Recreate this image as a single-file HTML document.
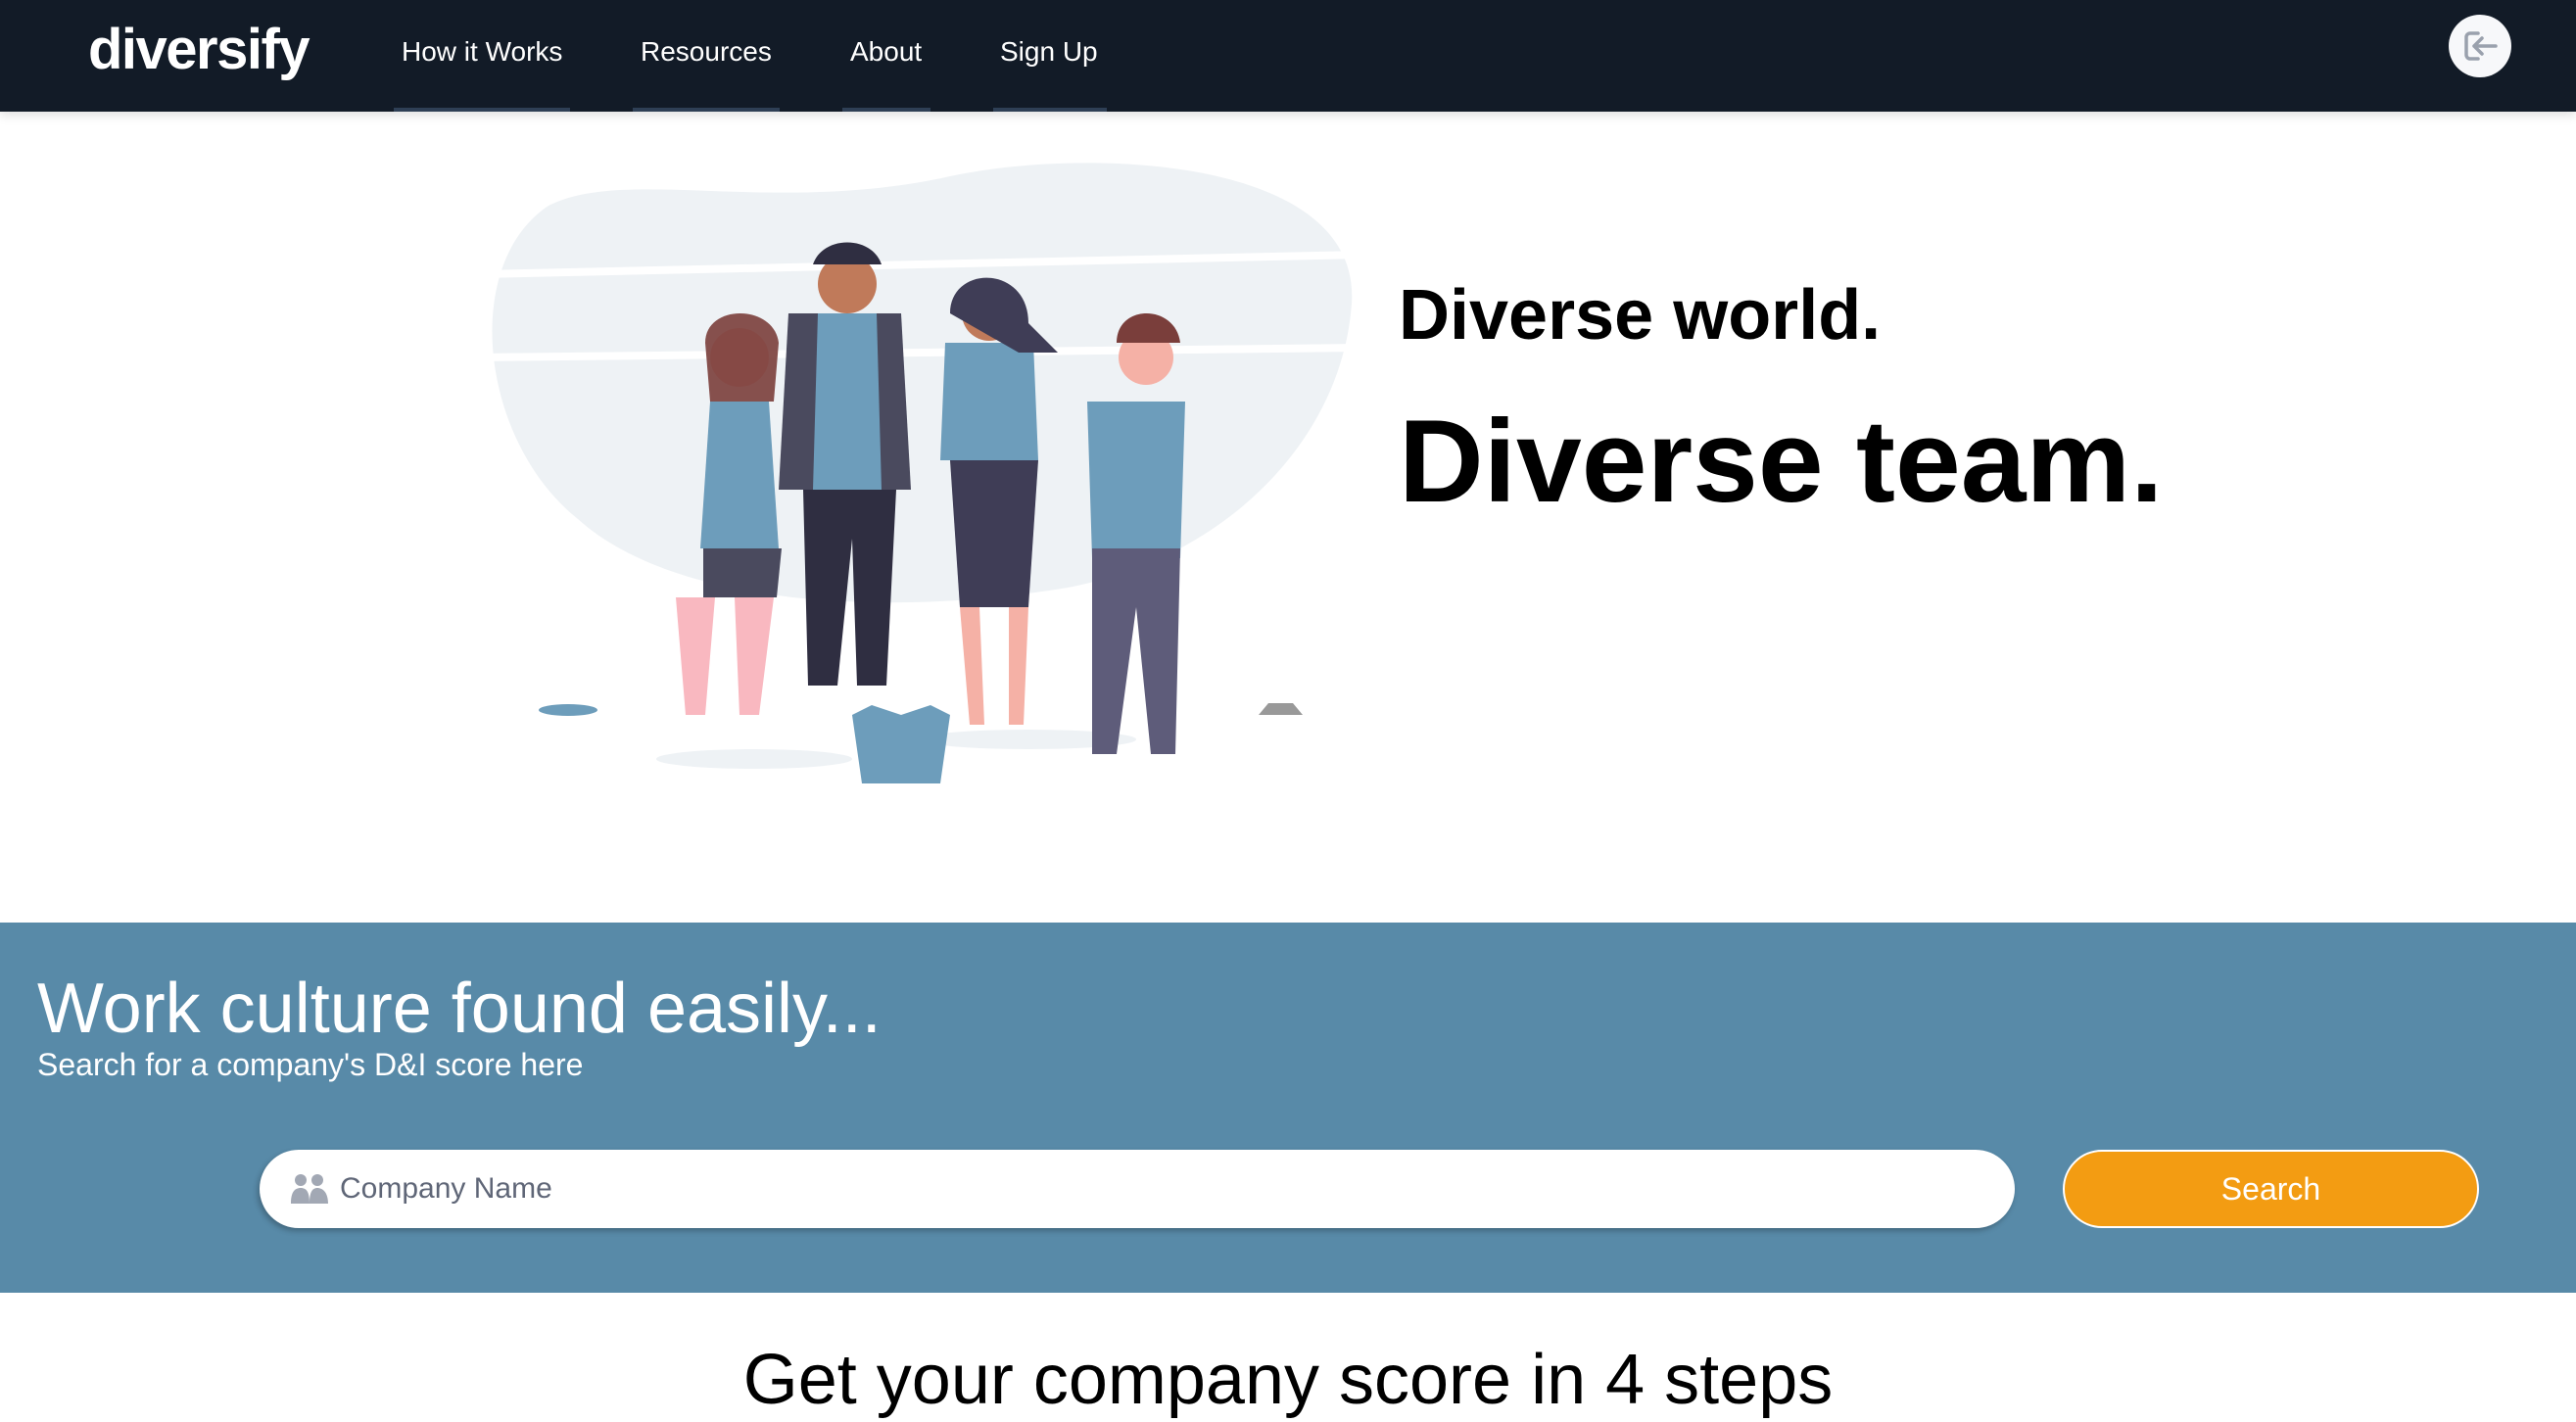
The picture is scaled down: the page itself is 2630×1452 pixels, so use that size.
<!DOCTYPE html>
<html><head><meta charset="utf-8"><style>
*{margin:0;padding:0;box-sizing:border-box}
body{width:2630px;height:1452px;overflow:hidden;background:#fff;font-family:"Liberation Sans",Arial,sans-serif;position:relative}
.nav{position:absolute;left:0;top:0;width:2630px;height:114px;background:#121b27;box-shadow:0 4px 10px rgba(0,0,0,.12)}
.logo{position:absolute;left:90px;top:17px;font-size:58px;font-weight:bold;color:#fff;letter-spacing:-1.5px}
.nl{position:absolute;top:37px;font-size:28px;color:#fff}
.tab{position:absolute;top:110px;height:4px;background:#2e3f55}
.ic{position:absolute;left:2500px;top:15px;width:64px;height:64px;border-radius:50%;background:#f7f8fa}
.h1{position:absolute;left:1428px;top:281px;font-size:72px;font-weight:bold;color:#000}
.h2{position:absolute;left:1428px;top:402px;font-size:120px;font-weight:bold;color:#000}
.band{position:absolute;left:0;top:942px;width:2630px;height:378px;background:#588aa8}
.t1{position:absolute;left:38px;font-size:72px;color:#fff}
.t2{position:absolute;left:38px;font-size:32px;color:#fff}
.inp{position:absolute;left:265px;top:1174px;width:1792px;height:80px;border-radius:40px;background:#fff;box-shadow:-2px 3px 6px rgba(0,0,0,.25)}
.inp span{position:absolute;left:82px;top:23px;font-size:30px;color:#5f6677}
.btn{position:absolute;left:2106px;top:1174px;width:425px;height:80px;border-radius:40px;background:#f39c12;border:2px solid #fff;color:#fff;font-size:32px;text-align:center;line-height:76px}
.steps{position:absolute;left:0;width:2630px;top:1368px;text-align:center;font-size:72px;color:#000}
</style></head><body>
<div class="nav">
<div class="logo">diversify</div>
<div class="nl" style="left:410px">How it Works</div>
<div class="nl" style="left:654px">Resources</div>
<div class="nl" style="left:868px">About</div>
<div class="nl" style="left:1021px">Sign Up</div>
<div class="tab" style="left:402px;width:180px"></div>
<div class="tab" style="left:646px;width:150px"></div>
<div class="tab" style="left:860px;width:90px"></div>
<div class="tab" style="left:1014px;width:116px"></div>
<div class="ic"><svg width="64" height="64" viewBox="0 0 64 64"><path d="M30 19h-8a4 4 0 0 0-4 4v18a4 4 0 0 0 4 4h8M48 32H26M34 24l-8 8 8 8" fill="none" stroke="#9aa1ad" stroke-width="3.5" stroke-linecap="round" stroke-linejoin="round"/></svg></div>
</div>
<svg style="position:absolute;left:490px;top:150px" width="900" height="690" viewBox="0 0 900 690">
<path d="M70 60 C150 20 300 70 480 30 C620 0 900 10 890 160 C880 300 760 420 600 450 C420 480 200 470 100 380 C0 300 -20 120 70 60Z" fill="#eef2f5"/>
<g stroke="#fff" stroke-width="8"><line x1="0" y1="130" x2="900" y2="110"/><line x1="0" y1="215" x2="900" y2="205"/></g>
<ellipse cx="90" cy="575" rx="30" ry="6" fill="#6d9dbb"/>
<ellipse cx="280" cy="625" rx="100" ry="10" fill="#eef2f5"/>
<ellipse cx="560" cy="605" rx="110" ry="10" fill="#eef2f5"/>
<path d="M795 580 l10 -12 h25 l10 12z" fill="#999"/>
<path d="M235 260h60l10 150h-80z" fill="#6d9dbb"/><path d="M228 410h80l-5 50h-75z" fill="#4a4a5e"/>
<path d="M200 460h40l-10 120h-20zM260 460h40l-15 120h-20z" fill="#f9b8c0"/>
<circle cx="265" cy="215" r="30" fill="#f5b1a6"/><path d="M230 200c0-40 70-40 75 0l-5 60h-65z" fill="#7a3e3b" opacity=".9"/>
<path d="M315 170h115l10 180h-135z" fill="#4a4a5e"/><path d="M345 170h60l5 180h-70z" fill="#6d9dbb"/>
<path d="M330 350h95l-10 200h-30l-5-150-15 150h-30z" fill="#2f2e41"/>
<circle cx="375" cy="140" r="30" fill="#c07a5a"/><path d="M340 120c10-30 60-30 70 0z" fill="#2f2e41"/>
<path d="M475 200h90l5 120h-100z" fill="#6d9dbb"/><path d="M480 320h90l-10 150h-70z" fill="#3f3d56"/>
<path d="M490 470h20l5 120h-15zM540 470h20l-5 120h-15z" fill="#f5b1a6"/>
<circle cx="520" cy="170" r="28" fill="#c07a5a"/><path d="M480 170c0-50 80-50 80 10l30 30-40 0z" fill="#3f3d56"/>
<path d="M620 260h100l-5 160h-90z" fill="#6d9dbb"/><path d="M625 410h90l-5 210h-25l-15-150-20 150h-25z" fill="#5e5c7a"/>
<circle cx="680" cy="215" r="28" fill="#f5b1a6"/><path d="M650 200c0-40 60-40 65 0z" fill="#7a3e3b"/>
<path d="M380 580l20-10 30 10 30-10 20 10-10 70h-80z" fill="#6d9dbb"/>
</svg>
<div class="h1">Diverse world.</div>
<div class="h2">Diverse team.</div>
<div class="band">
<div class="t1" style="top:47px">Work culture found easily...</div>
<div class="t2" style="top:127px">Search for a company's D&amp;I score here</div>
</div>
<div class="inp"><svg style="position:absolute;left:32px;top:25px" width="38" height="30" viewBox="0 0 38 30"><circle cx="10" cy="6" r="6" fill="#a2a8b4"/><circle cx="27" cy="6" r="6" fill="#a2a8b4"/><path d="M0 30c0-12 4-16 10-16s9 4 9 16zM19 30c0-12 3-16 8-16s11 4 11 16z" fill="#a2a8b4"/></svg><span>Company Name</span></div>
<div class="btn">Search</div>
<div class="steps">Get your company score in 4 steps</div>
</body></html>
